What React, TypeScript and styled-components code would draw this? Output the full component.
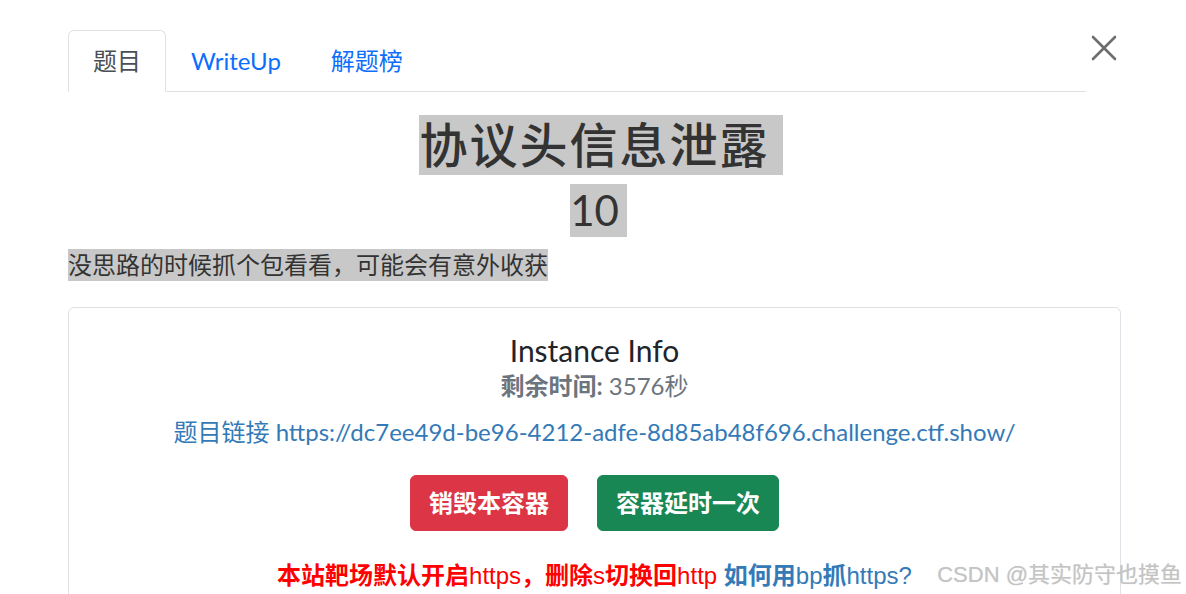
import React from "react";
import styled, { createGlobalStyle } from "styled-components";

const Global = createGlobalStyle`
  html, body { margin: 0; padding: 0; background: #fff; }
  body {
    font-family: Lato, "Noto Sans CJK SC", sans-serif;
    font-size: 24px;
    color: #333;
    width: 1186px;
    height: 594px;
    overflow: hidden;
  }
  * { box-sizing: border-box; }
`;

const Page = styled.div`
  position: relative;
  height: 594px;
  overflow: hidden;
  display: flex;
  flex-direction: column;
  padding: 30px 65px 0 68px;
`;

const Header = styled.div`
  display: flex;
  align-items: flex-start;
`;

const Tabs = styled.ul`
  flex: 1;
  display: flex;
  list-style: none;
  margin: 0;
  padding: 0;
  border-bottom: 1px solid #dee2e6;
`;

const Tab = styled.li<{ $active?: boolean }>`
  margin-bottom: -1px;
  padding: 12px 24px;
  line-height: 36px;
  font-size: 24px;
  border: 1px solid ${(p) => (p.$active ? "#dee2e6" : "transparent")};
  border-bottom-color: ${(p) => (p.$active ? "#fff" : "transparent")};
  border-radius: 6px 6px 0 0;
  background: ${(p) => (p.$active ? "#fff" : "transparent")};
  color: ${(p) => (p.$active ? "#495057" : "#0d6efd")};
`;

const CloseButton = styled.button`
  width: 35px;
  height: 36px;
  padding: 5px 4px 0 0;
  border: 0;
  background: transparent;
  display: flex;
  align-items: flex-start;
  justify-content: flex-end;
`;

const Title = styled.h1`
  margin: 24px 0 11px;
  text-align: center;
  font-size: 48px;
  line-height: 1.2;
  font-weight: 500;
  letter-spacing: 2px;
  color: #333;
`;

const Score = styled.h2`
  margin: 0 0 12px;
  text-align: center;
  font-size: 42px;
  line-height: 1.2;
  font-weight: 400;
  color: #333;
`;

const Sel = styled.span<{ $trail?: number }>`
  background: #c8c8c8;
  padding-top: 1px;
  padding-bottom: 2px;
  padding-right: ${(p) => p.$trail ?? 0}px;
  margin-right: ${(p) => -(p.$trail ?? 0)}px;
`;

const Desc = styled.p`
  margin: 0 0 24px;
  font-size: 24px;
  line-height: 36px;
  color: #333;
`;

const Card = styled.div`
  flex: none;
  border: 1px solid #dee2e6;
  border-radius: 6px;
  padding: 24px 24px 0;
  height: 320px;
  text-align: center;
`;

const CardTitle = styled.h5`
  margin: 0 0 4px;
  font-size: 30px;
  line-height: 1.2;
  font-weight: 400;
  color: #212529;
`;

const Muted = styled.h6`
  margin: 0 0 13px;
  font-size: 24px;
  line-height: 1.2;
  font-weight: 400;
  color: #6c757d;
  b { font-weight: 700; }
`;

const InfoLink = styled.p`
  margin: 0 0 25px;
  font-size: 24px;
  line-height: 36px;
  color: #337ab7;
`;

const Actions = styled.div`
  display: flex;
  justify-content: center;
  gap: 29px;
  margin-bottom: 27px;
`;

const Btn = styled.button<{ $tone: "danger" | "success" }>`
  font-family: Lato, "Noto Sans CJK SC", sans-serif;
  font-size: 24px;
  line-height: 36px;
  font-weight: 600;
  padding: 9px 18px;
  border-radius: 6px;
  border: 1px solid ${(p) => (p.$tone === "danger" ? "#dc3545" : "#198754")};
  background: ${(p) => (p.$tone === "danger" ? "#dc3545" : "#198754")};
  color: #fff;
`;

const Notice = styled.p`
  margin: 0;
  font-family: "Liberation Sans", "Noto Sans CJK SC", sans-serif;
  font-size: 24px;
  line-height: 36px;
  color: #ff0000;
  b { font-weight: 700; }
`;

const HelpLink = styled.span`
  color: #337ab7;
`;

const Watermark = styled.div`
  position: absolute;
  right: 4px;
  bottom: 4px;
  font-family: "Liberation Sans", "Noto Sans CJK SC", sans-serif;
  font-size: 22px;
  line-height: 30px;
  color: #c4c4c4;
  text-shadow: 0 0 1px rgba(0, 0, 0, 0.15);
`;

export default function App() {
  return (
    <>
      <Global />
      <Page>
        <Header>
          <Tabs>
            <Tab $active>题目</Tab>
            <Tab>WriteUp</Tab>
            <Tab>解题榜</Tab>
          </Tabs>
          <CloseButton aria-label="close">
            <svg width="26" height="26" viewBox="0 0 26 26">
              <path d="M2 2 L24 24 M24 2 L2 24" stroke="#6e6e6e" strokeWidth="2.6" strokeLinecap="round" />
            </svg>
          </CloseButton>
        </Header>
        <Title>
          <Sel $trail={13}>协议头信息泄露</Sel>
        </Title>
        <Score>
          <Sel $trail={8}>10</Sel>
        </Score>
        <Desc>
          <Sel>没思路的时候抓个包看看，可能会有意外收获</Sel>
        </Desc>
        <Card>
          <CardTitle>Instance Info</CardTitle>
          <Muted>
            <b>剩余时间:</b> 3576秒
          </Muted>
          <InfoLink>题目链接 https://dc7ee49d-be96-4212-adfe-8d85ab48f696.challenge.ctf.show/</InfoLink>
          <Actions>
            <Btn $tone="danger">销毁本容器</Btn>
            <Btn $tone="success">容器延时一次</Btn>
          </Actions>
          <Notice>
            <b>本站靶场默认开启</b>https<b>，删除</b>s<b>切换回</b>http{" "}
            <HelpLink>
              <b>如何用</b>bp<b>抓</b>https?
            </HelpLink>
          </Notice>
        </Card>
        <Watermark>CSDN @其实防守也摸鱼</Watermark>
      </Page>
    </>
  );
}
